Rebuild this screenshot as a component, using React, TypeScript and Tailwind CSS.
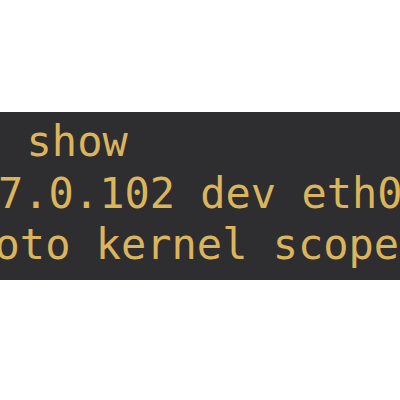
import React from 'react';

const lines: { text: string; offset: string }[] = [
  { text: 'ip route show', offset: 'ml-[-201px]' },
  { text: '7.0.102 dev eth0 proto', offset: 'ml-[-2px]' },
  { text: 'proto kernel scope link', offset: 'ml-[-56px]' },
];

const App: React.FC = () => {
  return (
    <div className="w-[400px] h-[400px] bg-white overflow-hidden">
      <div className="mt-[112px] h-[168px] bg-[#2e2e31] overflow-hidden pt-[4px]">
        {lines.map(line => (
          <div
            key={line.text}
            className={`${line.offset} whitespace-pre text-[42px] leading-[51.5px] text-[#dbb55c] font-['DejaVu_Sans_Mono',monospace]`}
          >
            {line.text}
          </div>
        ))}
      </div>
    </div>
  );
};

export default App;
